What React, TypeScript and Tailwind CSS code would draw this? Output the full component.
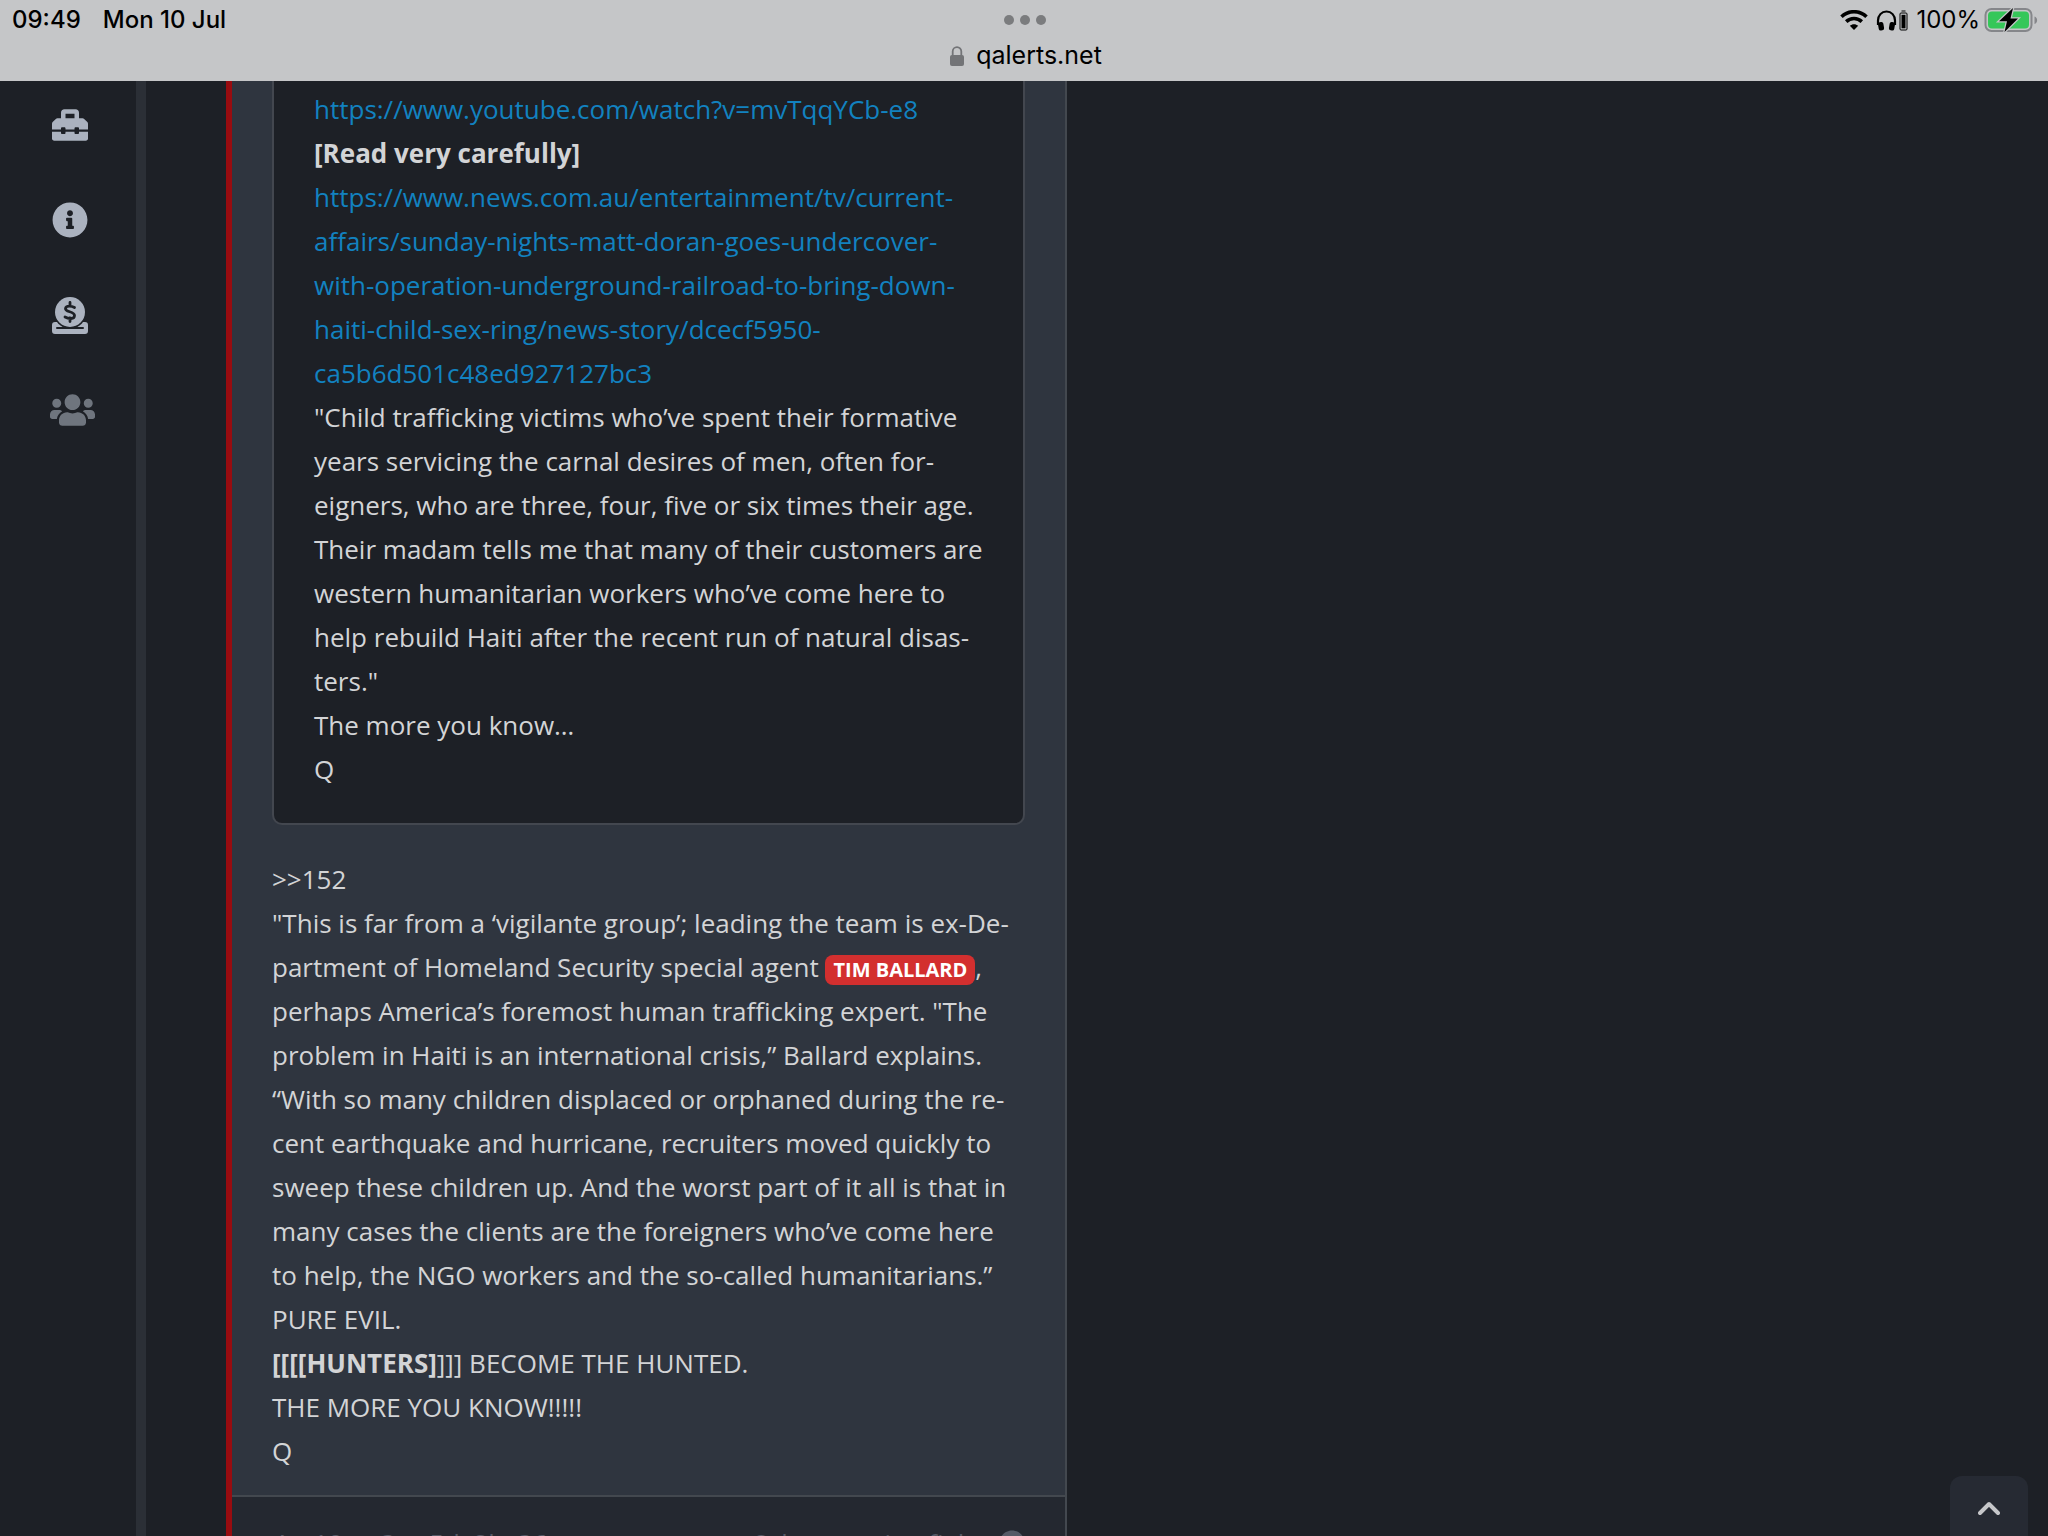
import { FaToolbox, FaInfoCircle, FaUsers } from "react-icons/fa";

const link = "text-[#1282c0]";

function StatusBar() {
  return (
    <header className="relative z-10 h-[81px] shrink-0 overflow-hidden bg-[#c5c6c8] font-['Inter','Liberation_Sans',sans-serif] text-black">
      <div className="grid h-10 grid-cols-3 items-center pl-3 pr-2.5">
        <div className="flex gap-[22px] text-2xl font-medium">
          <span>09:49</span>
          <span>Mon 10 Jul</span>
        </div>
        <button aria-label="Window options" className="flex justify-center gap-1.5">
          <i className="size-2.5 rounded-full bg-[#7b7c7e]" />
          <i className="size-2.5 rounded-full bg-[#7b7c7e]" />
          <i className="size-2.5 rounded-full bg-[#7b7c7e]" />
        </button>
        <div className="flex items-center justify-end text-2xl">
          <svg className="mr-2 h-5 w-7" viewBox="0 0 28 20" fill="none" stroke="#000" strokeWidth="3.6">
            <path d="M1.5 6.8C8.500 0 19.500 0 26.500 6.800" />
            <path d="M6.200 11.600C10.600 7.500 17.400 7.500 21.800 11.600" />
            <path d="M14 20L9.800 15.800C12.200 13.700 15.800 13.700 18.200 15.800Z" fill="#000" stroke="none" />
          </svg>
          <svg className="mr-2 h-[21px] w-8" viewBox="0 0 32 21" fill="none">
            <path d="M2 15V10.500C2 5.500 5.500 1.500 10.500 1.500S19 5.500 19 10.500V15" stroke="#000" strokeWidth="2.200" />
            <rect x="2.300" y="12" width="5.400" height="8.500" rx="2" transform="rotate(-10 5 16)" fill="#000" />
            <rect x="13.300" y="12" width="5.400" height="8.500" rx="2" transform="rotate(10 16 16)" fill="#000" />
            <rect x="24" y="3" width="7" height="17" rx="1" stroke="#000" />
            <rect x="25.500" y="4.800" width="4" height="13.500" fill="#000" />
            <path d="M25.500 1h4" stroke="#000" />
          </svg>
          <span>100%</span>
          <svg className="ml-1 h-6 w-[54px]" viewBox="0 0 54 24">
            <rect x="1.500" y="1" width="46" height="22" rx="6" fill="none" stroke="#85868a" strokeWidth="2" />
            <rect x="4" y="3.500" width="41" height="17" rx="4" fill="#35c759" />
            <path d="M50.500 8.500c3.500 1 3.500 6.500 0 7.500z" fill="#85868a" />
            <path d="M29 0L15 13.200h8L20.500 24 34 10.600h-7.500z" fill="#000" stroke="#c5c6c8" strokeWidth="2.500" paintOrder="stroke" />
          </svg>
        </div>
      </div>
      <div className="flex h-8 items-center justify-center gap-3 pl-1 text-[25px]">
        <svg className="h-5 w-3.5" viewBox="0 0 14 20" aria-hidden="true">
          <path d="M2.700 10V5.500a4.300 4.300 0 0 1 8.600 0V10" fill="none" stroke="#737477" strokeWidth="1.800" />
          <rect y="9" width="14" height="11" rx="2" fill="#737477" />
        </svg>
        <span>qalerts.net</span>
      </div>
    </header>
  );
}

function DonateIcon() {
  return (
    <svg className="h-[37px] w-9" viewBox="0 0 36 37" aria-hidden="true">
      <path d="M3 25h3l6 6h12l6-6h3a3 3 0 0 1 3 3v6a3 3 0 0 1-3 3H3a3 3 0 0 1-3-3v-6a3 3 0 0 1 3-3z" fill="#abb2bf" />
      <path d="M5 31h26" stroke="#1d2026" strokeWidth="2" strokeLinecap="round" />
      <circle cx="18" cy="15" r="16.500" fill="#1d2026" />
      <circle cx="18" cy="15" r="15" fill="#abb2bf" />
      <path d="M22.500 10.500C20 9 14 8 13.500 11.500c-.5 4 9 2.500 9 7 0 4-6 3.500-9.500 1.500M18 5.500v3M18 21v3.500" fill="none" stroke="#1d2026" strokeWidth="2.800" strokeLinecap="round" />
    </svg>
  );
}

function Sidebar() {
  return (
    <nav className="flex w-[146px] shrink-0 flex-col items-center border-r-[10px] border-[#2b2f36] pl-1 pt-3.5 text-[#abb2bf]">
      <button aria-label="Tools" className="flex h-[95px] w-24 items-start justify-center pt-3">
        <FaToolbox className="size-9" />
      </button>
      <button aria-label="Information" className="flex h-[95px] w-24 items-start justify-center pt-3">
        <FaInfoCircle className="size-9" />
      </button>
      <button aria-label="Donate" className="flex h-[95px] w-24 items-start justify-center pt-3">
        <DonateIcon />
      </button>
      <button aria-label="Community" className="flex h-[95px] w-24 items-start justify-center pl-1 pt-3 text-[#6f757e]">
        <FaUsers className="h-9 w-[45px]" />
      </button>
    </nav>
  );
}

export default function App() {
  return (
    <div className="relative flex h-screen flex-col overflow-hidden bg-[#1d2026] font-['Open_Sans','Noto_Sans',sans-serif]">
      <StatusBar />
      <div className="flex min-h-0 flex-1">
        <Sidebar />
        <main className="min-w-0 flex-1 pl-20">
          <article className="w-[841px] border-l-[6px] border-r-2 border-l-[#980c10] border-r-[#43484f] bg-[#2f353f] text-[26px] leading-[44px] text-[#d3d4d6]">
            <div className="px-10 pb-[22px]">
              <blockquote className="rounded-b-[10px] border-2 border-t-0 border-[#43474f] bg-[#1d2026] px-10 pb-8 pt-1.5">
                <a href="#video" className={link}>https://www.youtube.com/watch?v=mvTqqYCb-e8</a>
                <p className="font-bold">[Read very carefully]</p>
                <a href="#story" className={link}>
                  https://www.news.com.au/entertainment/tv/current-<br />
                  affairs/sunday-nights-matt-doran-goes-undercover-<br />
                  with-operation-underground-railroad-to-bring-down-<br />
                  haiti-child-sex-ring/news-story/dcecf5950-<br />
                  ca5b6d501c48ed927127bc3
                </a>
                <p className="whitespace-nowrap">
                  "Child trafficking victims who’ve spent their formative<br />
                  years servicing the carnal desires of men, often for-<br />
                  eigners, who are three, four, five or six times their age.<br />
                  Their madam tells me that many of their customers are<br />
                  western humanitarian workers who’ve come here to<br />
                  help rebuild Haiti after the recent run of natural disas-<br />
                  ters."
                </p>
                <p>The more you know…</p>
                <p>Q</p>
              </blockquote>
              <div className="whitespace-nowrap pt-8">
                <p>&gt;&gt;152</p>
                <p>
                  "This is far from a ‘vigilante group’; leading the team is ex-De-<br />
                  partment of Homeland Security special agent{" "}
                  <mark className="inline-block rounded-lg bg-[#d32f2f] px-2 align-middle text-xl leading-[30px] font-bold text-white">TIM BALLARD</mark>,<br />
                  perhaps America’s foremost human trafficking expert. "The<br />
                  problem in Haiti is an international crisis,” Ballard explains.<br />
                  “With so many children displaced or orphaned during the re-<br />
                  cent earthquake and hurricane, recruiters moved quickly to<br />
                  sweep these children up. And the worst part of it all is that in<br />
                  many cases the clients are the foreigners who’ve come here<br />
                  to help, the NGO workers and the so-called humanitarians.”
                </p>
                <p>PURE EVIL.</p>
                <p><b>[[[[HUNTERS]</b>]]] BECOME THE HUNTED.</p>
                <p>THE MORE YOU KNOW!!!!!</p>
                <p>Q</p>
              </div>
            </div>
            <footer className="flex h-24 items-start justify-between border-t-2 border-[#43484f] bg-[#242830] px-10 pt-6 text-[#555a66]">
              <span>4y, 10m, 3w, 5d, 2h, 36m ago</span>
              <span className="flex items-center gap-4">8chan patriotsfight <FaInfoCircle className="size-[26px]" /></span>
            </footer>
          </article>
        </main>
      </div>
      <button aria-label="Back to top" className="absolute bottom-0 right-5 flex h-[60px] w-[78px] justify-center rounded-t-xl bg-[#262a33] pt-[25px]">
        <svg className="h-[15px] w-[22px]" viewBox="0 0 22 15" fill="none" stroke="#c6c7ca" strokeWidth="4" strokeLinecap="round" strokeLinejoin="round">
          <path d="M2 12l9-9 9 9" />
        </svg>
      </button>
    </div>
  );
}
